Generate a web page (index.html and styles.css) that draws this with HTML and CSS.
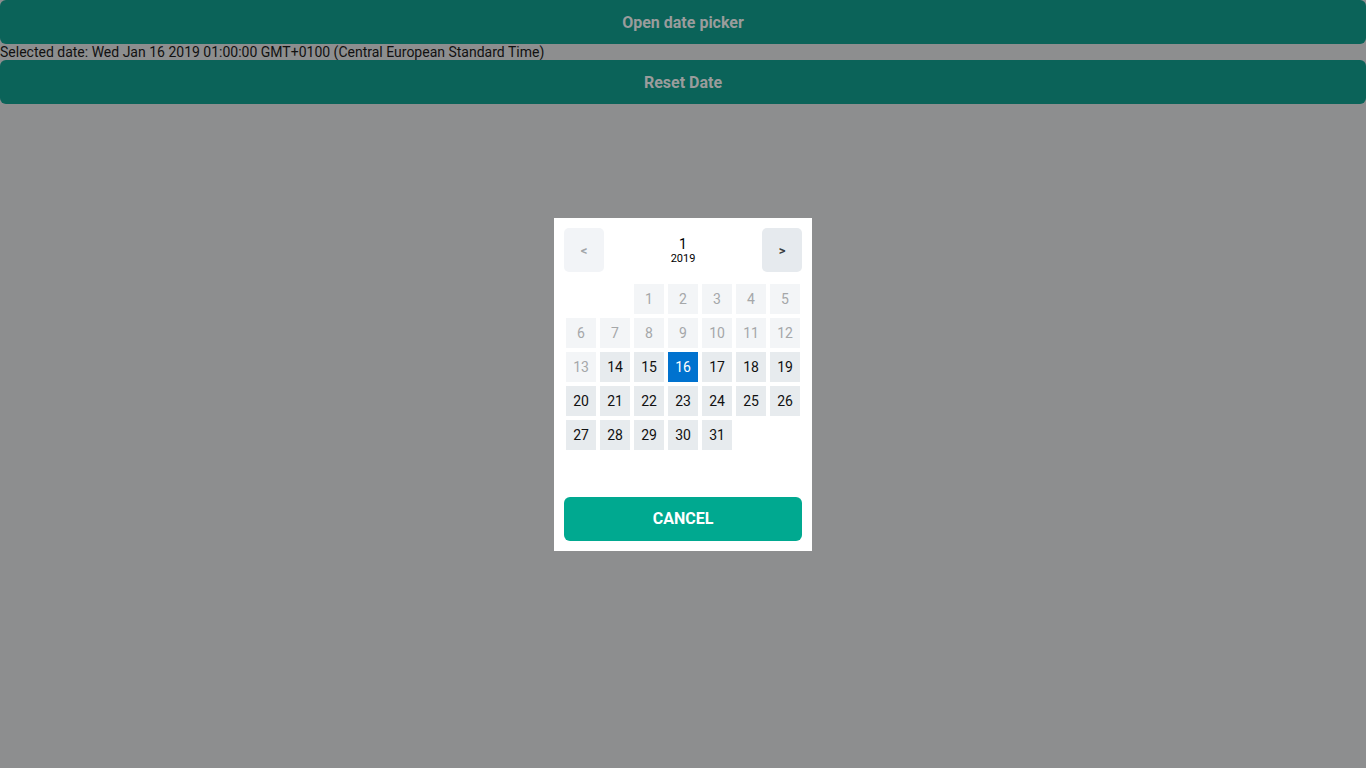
FILE: index.html
```html
<!DOCTYPE html>
<html>
<head>
<meta charset="utf-8">
<link rel="stylesheet" href="styles.css">
</head>
<body>
<div class="app">
  <button class="top-btn">Open date picker</button>
  <div class="selected">Selected date: Wed Jan 16 2019 01:00:00 GMT+0100 (Central European Standard Time)</div>
  <button class="top-btn">Reset Date</button>
</div>
<div class="modal">
  <div class="header">
    <button class="nav nav-prev">&lt;</button>
    <div class="title"><div class="month">1</div><div class="year">2019</div></div>
    <button class="nav nav-next">&gt;</button>
  </div>
  <div class="grid">
    <div class="cell empty"></div><div class="cell empty"></div>
    <div class="cell off">1</div><div class="cell off">2</div><div class="cell off">3</div><div class="cell off">4</div><div class="cell off">5</div>
    <div class="cell off">6</div><div class="cell off">7</div><div class="cell off">8</div><div class="cell off">9</div><div class="cell off">10</div><div class="cell off">11</div><div class="cell off">12</div>
    <div class="cell off">13</div><div class="cell">14</div><div class="cell">15</div><div class="cell sel">16</div><div class="cell">17</div><div class="cell">18</div><div class="cell">19</div>
    <div class="cell">20</div><div class="cell">21</div><div class="cell">22</div><div class="cell">23</div><div class="cell">24</div><div class="cell">25</div><div class="cell">26</div>
    <div class="cell">27</div><div class="cell">28</div><div class="cell">29</div><div class="cell">30</div><div class="cell">31</div><div class="cell empty"></div><div class="cell empty"></div>
    <div class="cell empty"></div><div class="cell empty"></div><div class="cell empty"></div><div class="cell empty"></div><div class="cell empty"></div><div class="cell empty"></div><div class="cell empty"></div>
  </div>
  <button class="cancel">CANCEL</button>
</div>
</body>
</html>
```
FILE: styles.css
```css
html, body {
  margin: 0;
  padding: 0;
  height: 100%;
}
body {
  background: #8d8e8f;
  font-family: Roboto, "Liberation Sans", sans-serif;
  color: #000;
}
.app {
  display: flex;
  flex-direction: column;
}
.top-btn {
  height: 44px;
  border: none;
  border-radius: 6px;
  background: #0b6359;
  color: #9a9c9c;
  font-family: Roboto, sans-serif;
  font-weight: 700;
  font-size: 16px;
  padding: 0;
  width: 100%;
}
.selected {
  font-size: 14px;
  line-height: 16px;
  height: 16px;
  color: #111;
}
.modal {
  position: absolute;
  left: 554px;
  top: 218px;
  width: 238px;
  padding: 10px;
  background: #fff;
  display: flex;
  flex-direction: column;
}
.header {
  display: flex;
  align-items: center;
  justify-content: space-between;
  height: 44px;
}
.nav {
  width: 40px;
  height: 44px;
  border: none;
  border-radius: 5px;
  font-family: Roboto, sans-serif;
  font-weight: 700;
  font-size: 13px;
  padding: 0;
}
.nav-prev {
  background: #f2f4f7;
  color: #a1a4a8;
}
.nav-next {
  background: #e6eaee;
  color: #3a3d40;
}
.title {
  text-align: center;
  margin-top: 2px;
}
.month {
  font-size: 14px;
  line-height: 15px;
}
.year {
  font-size: 11px;
  line-height: 14px;
}
.grid {
  display: grid;
  grid-template-columns: repeat(7, 30px);
  grid-auto-rows: 30px;
  gap: 4px;
  padding: 2px;
  margin-top: 10px;
}
.cell {
  background: #e7ebee;
  display: flex;
  align-items: center;
  justify-content: center;
  font-size: 14px;
  color: #111;
}
.cell.off {
  background: #f3f5f7;
  color: #a5a7a9;
}
.cell.sel {
  background: #0072cf;
  color: #fff;
}
.cell.empty {
  background: transparent;
}
.cancel {
  margin-top: 11px;
  height: 44px;
  border: none;
  border-radius: 6px;
  background: #00a990;
  color: #fff;
  font-family: Roboto, sans-serif;
  font-weight: 700;
  font-size: 16px;
  padding: 0 0 2px;
}
```
